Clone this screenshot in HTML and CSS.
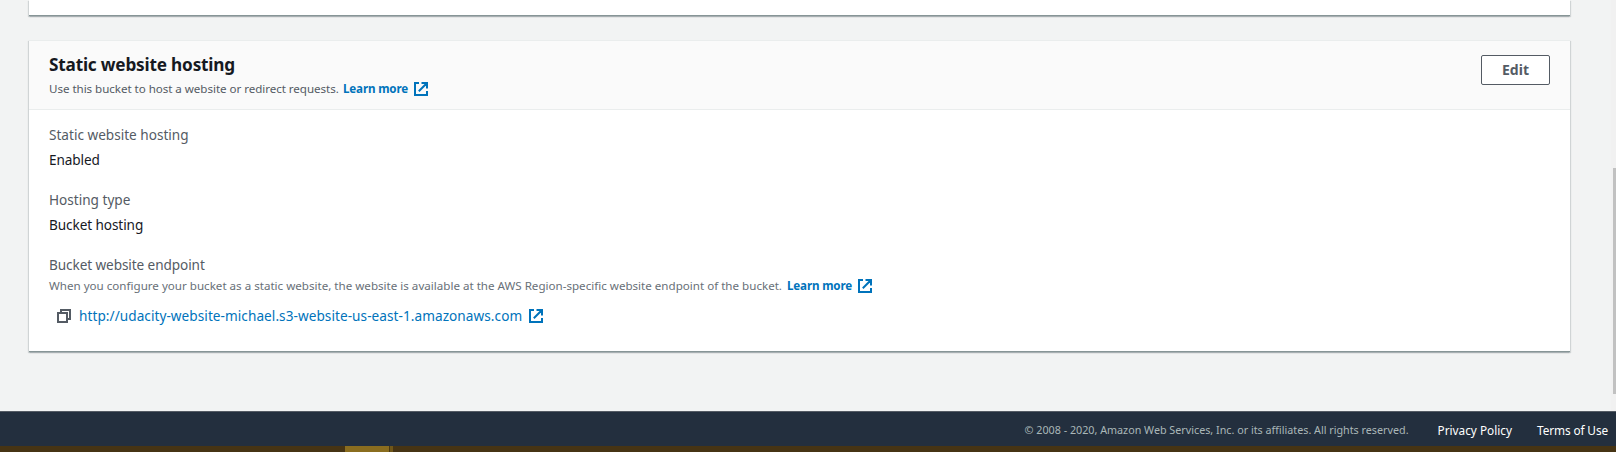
FILE: index.html
```html
<!DOCTYPE html>
<html lang="en">
<head>
<meta charset="utf-8">
<title>Static website hosting</title>
<link rel="stylesheet" href="styles.css">
</head>
<body>
<svg width="0" height="0" class="defs">
  <symbol id="external" viewBox="0 0 14 14"><path d="M5 1H1v12h12V9M7.5 1H13v5.5M13 1 4.8 9.2" fill="none" stroke="currentColor" stroke-width="2"/></symbol>
  <symbol id="copy" viewBox="0 0 14 14"><path d="M1 4h9v9H1zM4 4V1h9v9h-3" fill="none" stroke="currentColor" stroke-width="2"/></symbol>
</svg>
<div class="page">
  <main class="content">
    <section class="card card-previous"></section>
    <section class="card">
      <header class="card-header">
        <div>
          <h2 class="title">Static website hosting</h2>
          <p class="hint"><span class="description">Use this bucket to host a website or redirect requests.</span><a class="learn">Learn more</a><svg class="icon"><use href="#external"/></svg></p>
        </div>
        <button class="edit">Edit</button>
      </header>
      <dl class="details">
        <div>
          <dt class="label label-status">Static website hosting</dt>
          <dd class="value tight">Enabled</dd>
        </div>
        <div>
          <dt class="label">Hosting type</dt>
          <dd class="value tight">Bucket hosting</dd>
        </div>
        <div>
          <dt class="label tight">Bucket website endpoint</dt>
          <dd class="hint endpoint-hint"><span class="help">When you configure your bucket as a static website, the website is available at the AWS Region-specific website endpoint of the bucket.</span><a class="learn">Learn more</a><svg class="icon"><use href="#external"/></svg></dd>
          <dd class="endpoint"><svg class="icon copy"><use href="#copy"/></svg><a class="url">http://udacity-website-michael.s3-website-us-east-1.amazonaws.com</a><svg class="icon"><use href="#external"/></svg></dd>
        </div>
      </dl>
    </section>
  </main>
  <div class="scrollbar"><div class="thumb"></div></div>
</div>
<footer class="footer">
  <span class="copyright">© 2008 - 2020, Amazon Web Services, Inc. or its affiliates. All rights reserved.</span>
  <a class="privacy">Privacy Policy</a>
  <a class="terms">Terms of Use</a>
</footer>
<div class="taskbar"><div class="task"></div><div class="task-edge"></div></div>
</body>
</html>
```
FILE: styles.css
```css
* { box-sizing: border-box; }
body {
  margin: 0;
  height: 452px;
  overflow: hidden;
  background: #f2f3f3;
  color: #16191f;
  font: 13.6px/22px "Noto Sans", "Open Sans", sans-serif;
}
h2, p, dl, dd { margin: 0; }
.defs { display: block; }
.page { display: flex; height: 411px; overflow: hidden; }
.content { flex: 1; padding: 0 41px 0 29px; }
.card {
  height: 312px;
  background: #fff;
  border-top: 1px solid #eaeded;
  box-shadow: 0 1px 1px 0 rgba(0, 28, 36, .1), 1px 1px 1px 0 rgba(0, 28, 36, .12), -1px 1px 1px 0 rgba(0, 28, 36, .12);
  border-bottom: 1px solid #879596;
}
.card-previous { height: 16px; margin-bottom: 24px; border-top: 0; }
.card-header {
  display: flex;
  justify-content: space-between;
  height: 69px;
  padding: 12px 20px 0;
  background: #fafafa;
  border-bottom: 1px solid #eaeded;
}
.title { padding-top: 1px; font-size: 17.2px; line-height: 22px; letter-spacing: -.19px; font-weight: 700; }
.hint { display: flex; align-items: center; margin-top: 5px; font-size: 11.6px; line-height: 16px; color: #545b64; white-space: nowrap; }
.description { width: 294px; letter-spacing: -.045px; }
.learn { width: 71px; color: #0073bb; font-weight: 700; letter-spacing: -.15px; }
.icon { width: 14px; height: 14px; color: #0073bb; flex: none; }
.edit {
  width: 69px;
  height: 30px;
  margin-top: 2px;
  padding: 0;
  border: 1px solid #545b64;
  border-radius: 2px;
  background: #fff;
  color: #545b64;
  font: 700 14px/22px "Noto Sans", sans-serif;
}
.details { display: grid; gap: 18px; padding: 14px 20px 0; }
.label { color: #545b64; }
.value { margin-top: 3px; }
.tight { letter-spacing: -.09px; }
.endpoint-hint { margin-top: 2px; color: #687078; }
.help { width: 738px; }
.endpoint { display: flex; align-items: center; margin-top: 11px; padding-left: 8px; }
.copy { margin-right: 8px; color: #545b64; }
.url { width: 450px; color: #0073bb; letter-spacing: .06px; white-space: nowrap; }
.scrollbar { width: 5px; padding: 168px 0 0 2px; background: #f1f1f1; }
.thumb { height: 226px; background: #c1c1c1; }
.footer {
  display: flex;
  justify-content: flex-end;
  height: 35px;
  padding: 7px 8px 0 0;
  background: #232f3e;
  border-top: 1px solid #545b64;
  color: #fff;
  font-size: 11.8px;
  white-space: nowrap;
}
.copyright { width: 413px; color: #aab7b8; font-size: 10.75px; }
.privacy { width: 99.5px; }
.terms { width: 71px; letter-spacing: -.1px; }
.taskbar { display: flex; height: 6px; padding-left: 345px; background: #463414; }
.task { width: 44px; background: #8a6d1f; }
.task-edge { width: 4px; background: #6f5619; border-left: 1px solid #4a3914; }
```
